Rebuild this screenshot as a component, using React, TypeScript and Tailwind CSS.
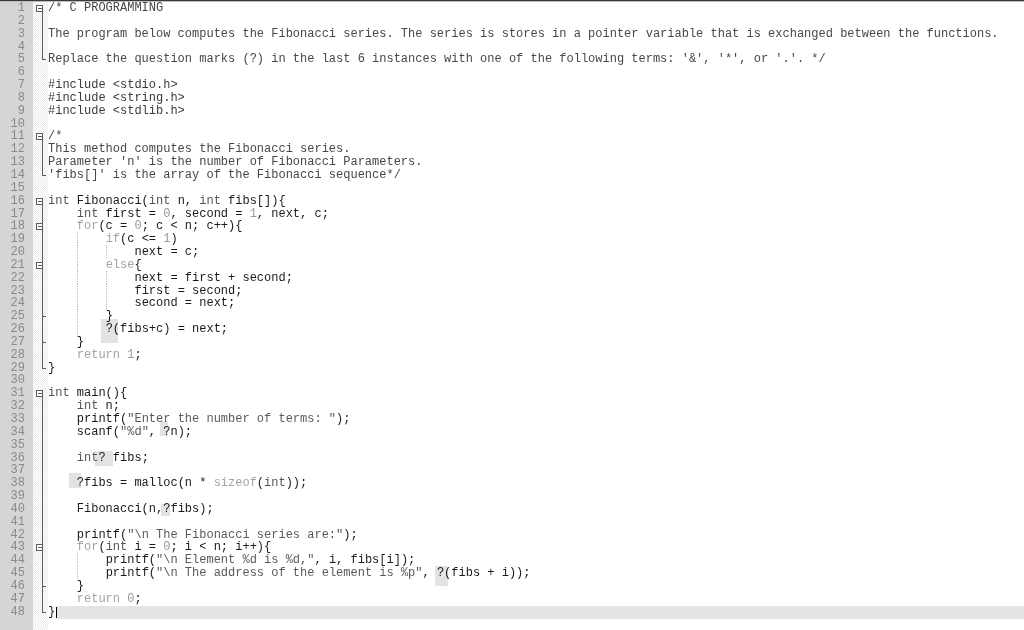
import React from 'react'

type FoldKind = '' | 'open' | 'box' | 'mid' | 'tick' | 'end'

const LINES: string[] = [
  '/* C PROGRAMMING',
  '',
  'The program below computes the Fibonacci series. The series is stores in a pointer variable that is exchanged between the functions.',
  '',
  "Replace the question marks (?) in the last 6 instances with one of the following terms: '&', '*', or '.'. */",
  '',
  '#include <stdio.h>',
  '#include <string.h>',
  '#include <stdlib.h>',
  '',
  '/*',
  'This method computes the Fibonacci series.',
  "Parameter 'n' is the number of Fibonacci Parameters.",
  "'fibs[]' is the array of the Fibonacci sequence*/",
  '',
  'int Fibonacci(int n, int fibs[]){',
  '    int first = 0, second = 1, next, c;',
  '    for(c = 0; c < n; c++){',
  '        if(c <= 1)',
  '            next = c;',
  '        else{',
  '            next = first + second;',
  '            first = second;',
  '            second = next;',
  '        }',
  '        ?(fibs+c) = next;',
  '    }',
  '    return 1;',
  '}',
  '',
  'int main(){',
  '    int n;',
  '    printf("Enter the number of terms: ");',
  '    scanf("%d", ?n);',
  '',
  '    int? fibs;',
  '',
  '    ?fibs = malloc(n * sizeof(int));',
  '',
  '    Fibonacci(n,?fibs);',
  '',
  '    printf("\\n The Fibonacci series are:");',
  '    for(int i = 0; i < n; i++){',
  '        printf("\\n Element %d is %d,", i, fibs[i]);',
  '        printf("\\n The address of the element is %p", ?(fibs + i));',
  '    }',
  '    return 0;',
  '}',
]

// fold margin markers by line number
const FOLDS: Record<number, FoldKind> = {
  1: 'open', 2: 'mid', 3: 'mid', 4: 'mid', 5: 'end',
  11: 'open', 12: 'mid', 13: 'mid', 14: 'end',
  16: 'open', 17: 'mid', 18: 'box', 19: 'mid', 20: 'mid', 21: 'box', 22: 'mid', 23: 'mid', 24: 'mid',
  25: 'tick', 26: 'mid', 27: 'tick', 28: 'mid', 29: 'end',
  31: 'open', 32: 'mid', 33: 'mid', 34: 'mid', 35: 'mid', 36: 'mid', 37: 'mid', 38: 'mid', 39: 'mid',
  40: 'mid', 41: 'mid', 42: 'mid', 43: 'box', 44: 'mid', 45: 'mid', 46: 'tick', 47: 'mid', 48: 'end',
}

// grey marks painted around the question marks
const MARKS = [
  { left: 101, top: 319, w: 17, h: 24 },
  { left: 160, top: 421, w: 8, h: 15 },
  { left: 95, top: 451, w: 18, h: 15 },
  { left: 69, top: 473, w: 12, h: 15 },
  { left: 161, top: 504, w: 9, h: 12 },
  { left: 435, top: 566, w: 13, h: 20 },
]

const TOKEN = /("[^"]*"|\b(?:for|if|else|return|sizeof|int)\b|\b\d+\b)/g

function Fold({ kind }: { kind: FoldKind }) {
  const s = '#5e5e5e'
  return (
    <svg width="15" height="13" viewBox="0 0 15 13" className="block overflow-visible" shapeRendering="crispEdges">
      {kind === 'open' && <line x1="9.5" y1="9" x2="9.5" y2="13" stroke={s} />}
      {kind === 'box' && <>
        <line x1="9.5" y1="0" x2="9.5" y2="3" stroke={s} />
        <line x1="9.5" y1="9" x2="9.5" y2="13" stroke={s} />
      </>}
      {(kind === 'open' || kind === 'box') && <>
        <rect x="3.5" y="3.5" width="6" height="6" fill="#fff" stroke={s} />
        <line x1="5" y1="6.5" x2="8.5" y2="6.5" stroke={s} />
      </>}
      {(kind === 'mid' || kind === 'tick') && <line x1="9.5" y1="0" x2="9.5" y2="13" stroke={s} />}
      {kind === 'end' && <line x1="9.5" y1="0" x2="9.5" y2="6.5" stroke={s} />}
      {(kind === 'end' || kind === 'tick') && <line x1="9.5" y1="6.5" x2="13" y2="6.5" stroke={s} />}
    </svg>
  )
}

function CodeText({ text }: { text: string }) {
  const indent = text.length - text.trimStart().length
  const levels = Math.floor(indent / 4)
  const parts = text.slice(indent).split(TOKEN)
  return (
    <>
      {Array.from({ length: levels }, (_, i) => (
        <span
          key={'g' + i}
          className={i > 0 ? 'bg-[linear-gradient(#b5b5b5_50%,transparent_50%)] bg-[length:1px_2px] bg-repeat-y' : ''}
        >
          {'    '}
        </span>
      ))}
      {parts.map((p, i) => {
        if (i % 2 === 0) return <span key={i}>{p}</span>
        let cls = 'text-[#a3a3a3]'
        if (p.startsWith('"')) cls = 'text-[#5a5a5a]'
        else if (p === 'int') cls = 'text-[#555]'
        else if (/^\d+$/.test(p)) cls = 'text-[#9a9a9a]'
        return <span key={i} className={cls}>{p}</span>
      })}
    </>
  )
}

export default function App() {
  return (
    <div className="relative h-[630px] w-[1024px] overflow-hidden bg-white font-['Liberation_Mono',monospace] text-[12px] leading-[12.85px]">
      <div className="h-px bg-[#3a3a3a]" />
      <div className="h-px bg-[#bdbdbd]" />
      <div className="flex h-[628px] flex-col">
        {LINES.map((line, i) => {
          const n = i + 1
          const comment = n <= 14 && (n < 7 || n > 9)
          return (
            <div key={n} className="flex h-[12.85px] shrink-0">
              <div className="w-[33px] shrink-0 bg-[#d5d5d5] pr-[8px] text-right text-[#8a8a8a]">{n}</div>
              <div className="w-[15px] shrink-0 bg-[repeating-conic-gradient(#ececec_0%_25%,#ffffff_0%_50%)] bg-[length:2px_2px]">
                <Fold kind={FOLDS[n] ?? ''} />
              </div>
              <div className="flex flex-1 whitespace-pre text-[#1a1a1a]">
                {n === 48 ? (
                  <>
                    <span>{line}</span>
                    <span className="my-[1px] ml-[1px] w-px bg-black" />
                    <span className="flex-1 bg-[#e4e4e4]" />
                  </>
                ) : comment ? (
                  <span className="text-[#474747]">{line}</span>
                ) : (
                  <span className={n <= 9 ? 'text-[#3a3a3a]' : ''}>
                    <CodeText text={line} />
                  </span>
                )}
              </div>
            </div>
          )
        })}
        <div className="flex flex-1">
          <div className="w-[33px] shrink-0 bg-[#d5d5d5]" />
          <div className="w-[15px] shrink-0 bg-[repeating-conic-gradient(#ececec_0%_25%,#ffffff_0%_50%)] bg-[length:2px_2px]" />
          <div className="flex-1" />
        </div>
      </div>
      {MARKS.map((m, i) => (
        <div
          key={i}
          className="pointer-events-none absolute bg-[#e3e3e3] mix-blend-multiply"
          style={{ left: m.left, top: m.top, width: m.w, height: m.h }}
        />
      ))}
    </div>
  )
}
